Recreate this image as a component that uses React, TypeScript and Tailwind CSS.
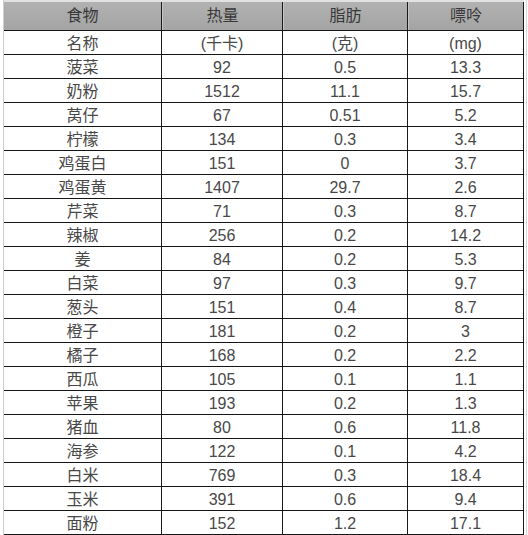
const header = ['食物', '热量', '脂肪', '嘌呤'];

const rows: string[][] = [
  ['名称', '(千卡)', '(克)', '(mg)'],
  ['菠菜', '92', '0.5', '13.3'],
  ['奶粉', '1512', '11.1', '15.7'],
  ['莴仔', '67', '0.51', '5.2'],
  ['柠檬', '134', '0.3', '3.4'],
  ['鸡蛋白', '151', '0', '3.7'],
  ['鸡蛋黄', '1407', '29.7', '2.6'],
  ['芹菜', '71', '0.3', '8.7'],
  ['辣椒', '256', '0.2', '14.2'],
  ['姜', '84', '0.2', '5.3'],
  ['白菜', '97', '0.3', '9.7'],
  ['葱头', '151', '0.4', '8.7'],
  ['橙子', '181', '0.2', '3'],
  ['橘子', '168', '0.2', '2.2'],
  ['西瓜', '105', '0.1', '1.1'],
  ['苹果', '193', '0.2', '1.3'],
  ['猪血', '80', '0.6', '11.8'],
  ['海参', '122', '0.1', '4.2'],
  ['白米', '769', '0.3', '18.4'],
  ['玉米', '391', '0.6', '9.4'],
  ['面粉', '152', '1.2', '17.1'],
];

const widths = ['w-[158px]', 'w-[121px]', 'w-[125px]', 'w-[116px]'];

export default function App() {
  return (
    <div
      className="w-[528px] h-[535px] bg-white overflow-hidden flex text-[16px] text-[#484848]"
      style={{ fontFamily: '"Liberation Sans", "Noto Sans CJK SC", sans-serif' }}
    >
      <div className="ml-[3px] border-l border-[#cfcfcf] flex flex-col">
        <div className="h-[2px] bg-[#e2e2e2]" />
        <div className="flex h-[29px] bg-gradient-to-b from-[#b2b2b2] to-[#a4a4a4] border-b border-[#151515]">
          {header.map((h, i) => (
            <div
              key={h}
              className={`${widths[i]} flex items-center justify-center border-r border-[#1a1a1a] text-[#383838] ${
                i > 0 ? 'border-l border-l-[#c4c4c4]' : ''
              }`}
            >
              {h}
            </div>
          ))}
        </div>
        {rows.map((r) => (
          <div key={r[0]} className="flex h-[24px] border-b border-[#151515]">
            {r.map((c, i) => (
              <div
                key={i}
                className={`${widths[i]} flex items-center justify-center pt-[2px] border-r border-[#1a1a1a] leading-none`}
              >
                {c}
              </div>
            ))}
          </div>
        ))}
      </div>
      <div className="ml-[2px] border-l border-[#d6d6d6]" />
    </div>
  );
}
